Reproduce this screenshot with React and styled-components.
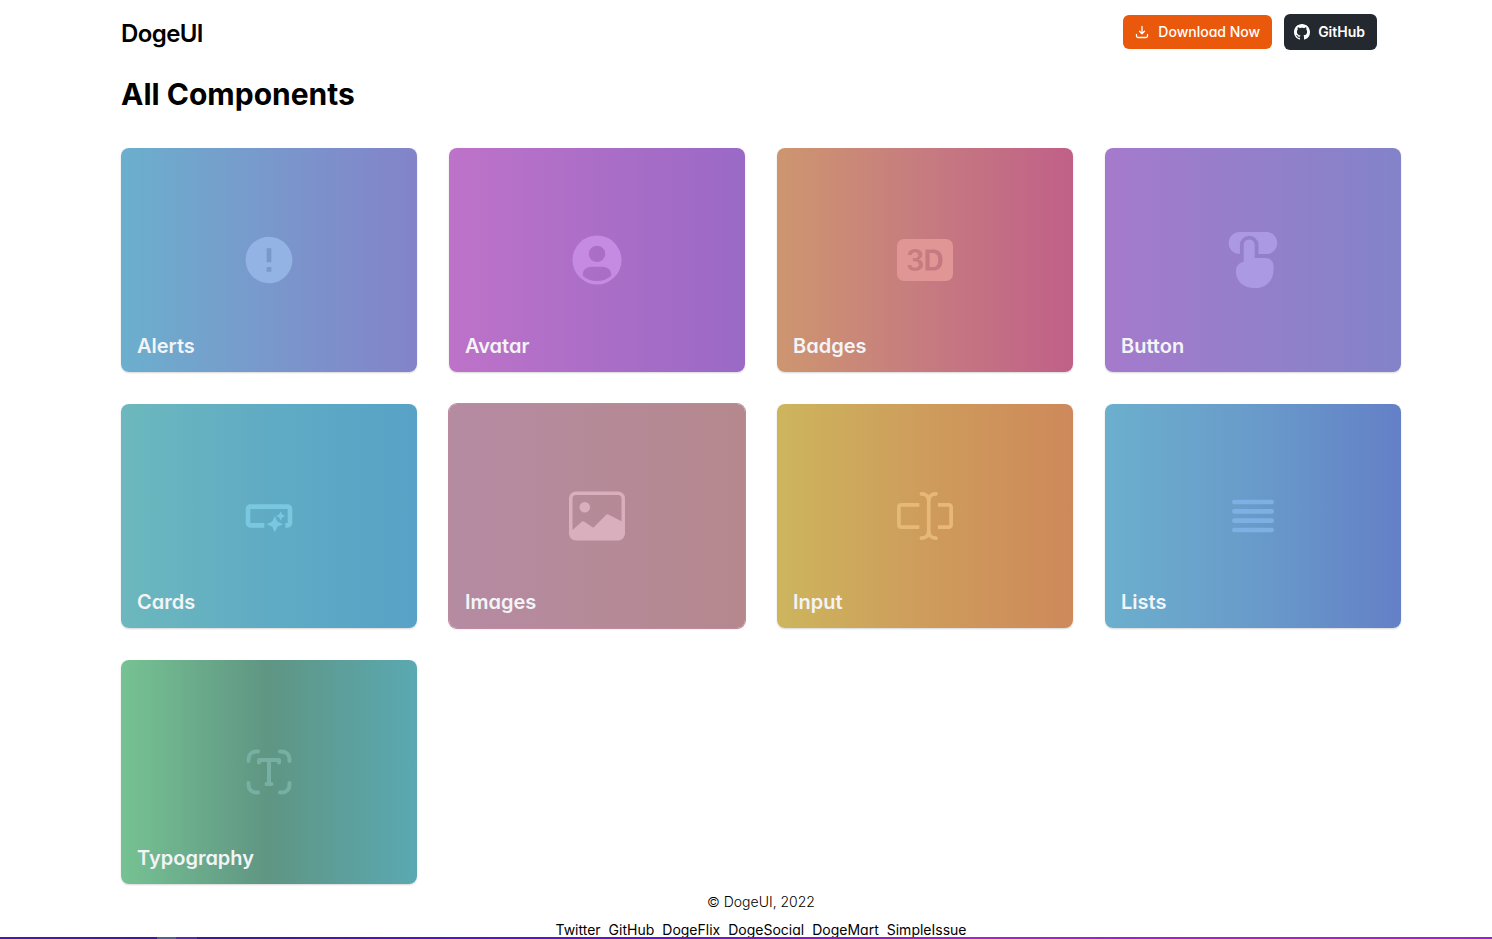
import React from "react";
import styled, { createGlobalStyle } from "styled-components";
import { MdError, MdSmartButton } from "react-icons/md";
import { BsBadge3dFill, BsImage, BsGithub } from "react-icons/bs";

const GlobalStyle = createGlobalStyle`
  *, *::before, *::after { box-sizing: border-box; }
  body {
    margin: 0;
    background: #fff;
    color: #000;
    font-family: Inter, "Liberation Sans", sans-serif;
    font-feature-settings: "cv11";
  }
  h1, h2, p, ul { margin: 0; padding: 0; }
  a { color: inherit; text-decoration: none; }
`;

const Page = styled.div`
  padding-left: 30px;
`;

const Container = styled.div`
  max-width: 1280px;
  margin: 0 auto;
`;

const Header = styled.header`
  display: flex;
  align-items: center;
  justify-content: space-between;
  height: 64px;
  padding-right: 24px;
`;

const Brand = styled.a`
  padding-top: 4px;
  font-size: 24px;
  line-height: 32px;
  font-weight: 600;
  letter-spacing: -0.025em;
`;

const Actions = styled.div`
  display: flex;
  align-items: center;
  gap: 12px;
`;

const ActionButton = styled.button`
  display: flex;
  align-items: center;
  gap: ${(p) => (p.$dark ? 8 : 9)}px;
  height: ${(p) => (p.$dark ? 36 : 34)}px;
  padding: 0 12px 0 ${(p) => (p.$dark ? 10 : 12)}px;
  border: 0;
  border-radius: 6px;
  background: ${(p) => (p.$dark ? "#24292f" : "#ea580c")};
  color: #fff;
  font: inherit;
  font-size: 14px;
  line-height: 20px;
  font-weight: ${(p) => (p.$dark ? 600 : 500)};
  cursor: pointer;
`;

const Title = styled.h1`
  padding-top: 12px;
  font-size: 30px;
  line-height: 36px;
  font-weight: 700;
`;

const Grid = styled.main`
  display: grid;
  grid-template-columns: repeat(auto-fill, minmax(272px, 1fr));
  gap: 32px;
  margin-top: 36px;
`;

const Card = styled.a`
  display: grid;
  grid-template-rows: 1fr;
  height: 224px;
  padding: 12px 16px;
  border-radius: 8px;
  background: linear-gradient(to right, ${(p) => p.$stops});
  box-shadow: ${(p) => (p.$active ? "0 0 0 1px #bd8ba0, " : "")}0 1px 2px rgba(0, 0, 0, 0.16);
  color: #f3f4f6;
`;

const CardIcon = styled.span`
  grid-area: 1 / 1;
  place-self: center;
  display: flex;
  color: ${(p) => p.$color};
`;

const CardName = styled.h2`
  grid-area: 1 / 1;
  align-self: end;
  font-size: 20px;
  line-height: 28px;
  font-weight: 600;
`;

const Footer = styled.footer`
  display: flex;
  flex-direction: column;
  align-items: center;
  gap: 12px;
  padding-top: 10px;
  font-size: 14px;
  line-height: 16px;
  font-weight: 300;
`;

const FooterLinks = styled.nav`
  display: flex;
  gap: 8px;
  font-weight: 400;
`;

const BottomStrip = styled.div`
  position: fixed;
  left: 0;
  right: 0;
  bottom: 0;
  height: 2px;
  background:
    linear-gradient(to right, transparent 157px, #526391 157px, #526391 176px, #5928b0 176px, #5928b0 197px, transparent 197px),
    linear-gradient(to right, #4a18b0, #3b189c 15%, #5612cc 30%, #6714d0 45%, #ad20cc 65%, #a51add 75%, #b01ccc 85%, #a51ae0);
`;

function DownloadIcon() {
  return (
    <svg width="14" height="14" viewBox="0 0 14 14" fill="none" stroke="currentColor" strokeWidth="1.3" strokeLinecap="round" strokeLinejoin="round" aria-hidden="true">
      <path d="M7 1.500v7M4.500 6.200 7 8.700l2.500-2.500M1.500 9.500v1.500q0 1.500 1.500 1.500h8q1.500 0 1.500-1.500V9.500" />
    </svg>
  );
}

function AvatarIcon() {
  return (
    <svg width="56" height="56" viewBox="0 0 56 56" fill="currentColor" aria-hidden="true">
      <path fillRule="evenodd" d="M28 3.500a24.500 24.500 0 1 1 0 49a24.500 24.500 0 0 1 0-49zM28 13.700a8.200 8.200 0 1 0 0 16.400a8.200 8.200 0 0 0 0-16.400zM22.500 34.800C17 34.800 13.800 38.500 13.800 42.500V43.700C17.500 47.300 22.500 49 28 49S38.500 47.300 42.200 43.700V42.500C42.200 38.500 39 34.800 33.500 34.800z" />
    </svg>
  );
}

function TapIcon() {
  return (
    <svg width="56" height="56" viewBox="0 0 56 56" fill="currentColor" aria-hidden="true">
      <path d="M15 0H41.500C47.500 0 52.200 5 52.200 11S47.500 22 41.500 22H33.500V13A9.300 9.300 0 0 0 14.900 13V22C8.700 22 3.700 17.500 3.700 11S8.700 0 15 0z" />
      <path d="M24.200 7.500A5.500 5.500 0 0 1 29.700 13V26H40C45.500 26 48.500 29 48.500 34.500V38C48.500 48.500 41 56 31 56H29C18.500 56 11 49 11 40V38.500C11 34.500 14 30.500 18.700 29.700V13A5.500 5.500 0 0 1 24.200 7.500z" />
    </svg>
  );
}

function InputIcon() {
  return (
    <svg width="56" height="56" viewBox="0 0 56 56" fill="none" stroke="currentColor" strokeWidth="3.7" aria-hidden="true">
      <path d="M22.300 16.800H4.500Q1.900 16.800 1.900 19.400V36.600Q1.900 39.200 4.500 39.200H22.300M41 16.800H51.500Q54.100 16.800 54.100 19.400V36.600Q54.100 39.200 51.500 39.200H41" />
      <path strokeLinecap="round" strokeLinejoin="round" d="M24.400 5.800C29 5.800 31.700 8.500 31.700 13V43C31.700 47.500 29 50.200 24.400 50.200M39 5.800C34.400 5.800 31.700 8.500 31.700 13M31.700 43C31.700 47.500 34.400 50.200 39 50.200" />
    </svg>
  );
}

function ListIcon() {
  return (
    <svg width="56" height="56" viewBox="0 0 24 24" fill="none" stroke="currentColor" strokeWidth="2" strokeLinecap="round" aria-hidden="true">
      <path d="M4 6h16M4 10h16M4 14h16M4 18h16" />
    </svg>
  );
}

function TextScanIcon() {
  return (
    <svg width="56" height="56" viewBox="0 0 56 56" fill="none" stroke="currentColor" strokeWidth="4" strokeLinecap="round" strokeLinejoin="round" aria-hidden="true">
      <path d="M7.500 17V15.500C7.500 10.500 10.500 7.500 15.500 7.500H17M39 7.500H40.500C45.500 7.500 48.500 10.500 48.500 15.500V17M48.500 39V40.500C48.500 45.500 45.500 48.500 40.500 48.500H39M17 48.500H15.500C10.500 48.500 7.500 45.500 7.500 40.500V39" />
      <path d="M18 18.500V16H38V18.500M28 16V40M25.500 40H30.500" />
    </svg>
  );
}

const components = [
  { name: "Alerts", stops: "#6bafcd, #7998cc 50%, #8383c9", color: "#93b3e4", icon: <MdError size={56} /> },
  { name: "Avatar", stops: "#be72c9, #ab6ec7 50%, #9a69c6", color: "#c58ae2", icon: <AvatarIcon /> },
  { name: "Badges", stops: "#cd966f, #c67b80 50%, #c06088", color: "#e09695", icon: <BsBadge3dFill size={56} /> },
  { name: "Button", stops: "#a57acc, #947fca 50%, #8383c9", color: "#ac99e4", icon: <TapIcon /> },
  { name: "Cards", stops: "#6cb8bd, #60abc4 50%, #57a2c6", color: "#7ac7e0", icon: <MdSmartButton size={56} /> },
  { name: "Images", stops: "#b58ba3, #b58a98 50%, #b5888e", color: "#d9afbe", icon: <BsImage size={56} />, active: true },
  { name: "Input", stops: "#cdb55d, #ce9c5c 50%, #ce895a", color: "#e7b978", icon: <InputIcon /> },
  { name: "Lists", stops: "#6bafcd, #699bca 50%, #6480c7", color: "#7fb0e3", icon: <ListIcon /> },
  { name: "Typography", stops: "#76c293, #5f9583 50%, #5aa9b2", color: "#77b0a2", icon: <TextScanIcon /> },
];

const links = ["Twitter", "GitHub", "DogeFlix", "DogeSocial", "DogeMart", "SimpleIssue"];

export default function App() {
  return (
    <Page>
      <GlobalStyle />
      <Container>
        <Header>
          <Brand href="#">DogeUI</Brand>
          <Actions>
            <ActionButton type="button">
              <DownloadIcon />
              Download Now
            </ActionButton>
            <ActionButton type="button" $dark>
              <BsGithub size={16} />
              GitHub
            </ActionButton>
          </Actions>
        </Header>
        <Title>All Components</Title>
        <Grid>
          {components.map((c) => (
            <Card key={c.name} href={`#${c.name.toLowerCase()}`} $stops={c.stops} $active={c.active}>
              <CardIcon $color={c.color}>{c.icon}</CardIcon>
              <CardName>{c.name}</CardName>
            </Card>
          ))}
        </Grid>
        <Footer>
          <p>© DogeUI, 2022</p>
          <FooterLinks>
            {links.map((l) => (
              <a key={l} href={`#${l.toLowerCase()}`}>{l}</a>
            ))}
          </FooterLinks>
        </Footer>
      </Container>
      <BottomStrip />
    </Page>
  );
}
